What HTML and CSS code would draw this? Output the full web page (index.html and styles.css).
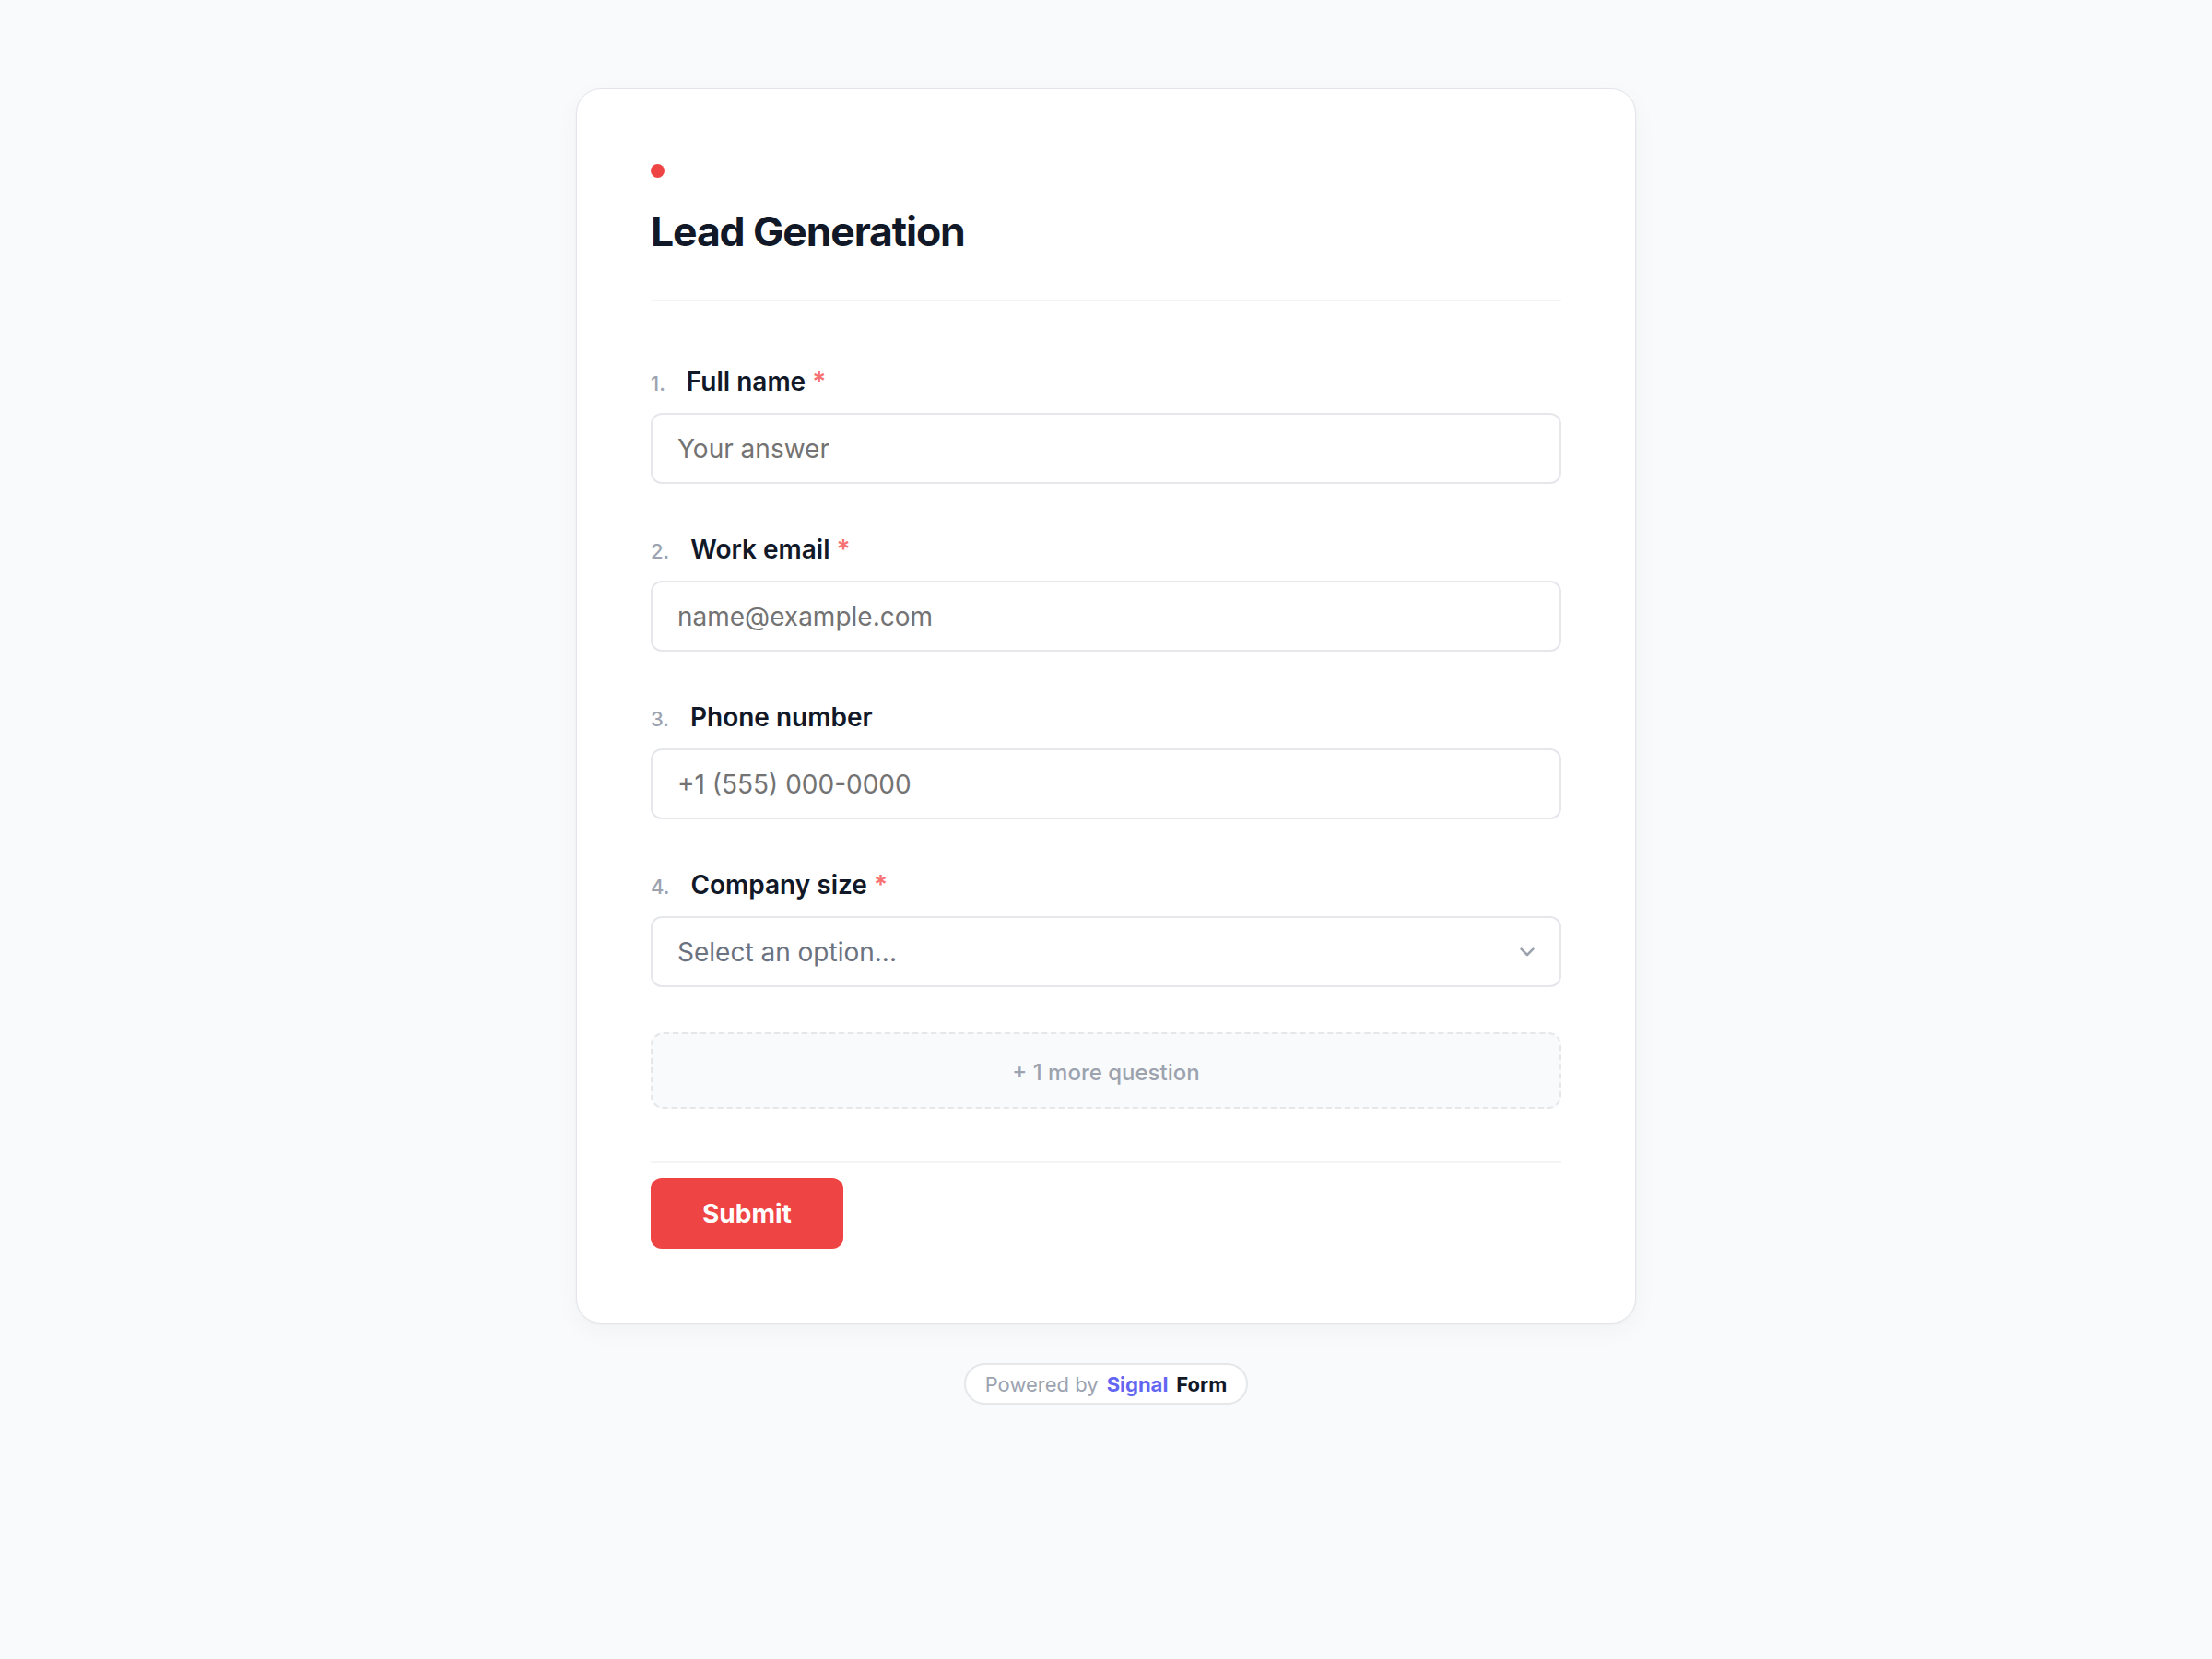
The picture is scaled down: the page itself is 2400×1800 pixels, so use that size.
FILE: index.html
```html
<!DOCTYPE html>
<html lang="en">
<head>
<meta charset="utf-8">
<title>Lead Generation</title>
<link rel="stylesheet" href="styles.css">
</head>
<body>
<main class="page">
  <section class="card">
    <header class="card-head">
      <span class="dot"></span>
      <h1 class="title">Lead Generation</h1>
    </header>

    <div class="questions">
      <div class="question">
        <label class="q-label"><span class="q-num">1.</span><span class="q-text">Full name</span><span class="req">*</span></label>
        <input class="field" type="text" placeholder="Your answer">
      </div>
      <div class="question">
        <label class="q-label"><span class="q-num">2.</span><span class="q-text">Work email</span><span class="req">*</span></label>
        <input class="field" type="text" placeholder="name@example.com">
      </div>
      <div class="question">
        <label class="q-label"><span class="q-num">3.</span><span class="q-text">Phone number</span></label>
        <input class="field" type="text" placeholder="+1 (555) 000-0000">
      </div>
      <div class="question">
        <label class="q-label"><span class="q-num">4.</span><span class="q-text">Company size</span><span class="req">*</span></label>
        <div class="field select">
          <span class="select-text">Select an option...</span>
          <svg class="chevron" width="16" height="10" viewBox="0 0 16 10"><polyline points="1.6,1.6 8,8 14.4,1.6" fill="none" stroke="#9ca3af" stroke-width="2.6" stroke-linecap="round" stroke-linejoin="round"/></svg>
        </div>
      </div>
      <div class="more">+ 1 more question</div>
    </div>

    <footer class="card-foot">
      <button class="submit" type="button">Submit</button>
    </footer>
  </section>

  <div class="powered">
    <span class="pw-muted">Powered by</span>
    <span class="pw-brand">Signal</span>
    <span class="pw-form">Form</span>
  </div>
</main>
</body>
</html>
```
FILE: styles.css
```css
* { box-sizing: border-box; }

html, body {
  margin: 0;
  padding: 0;
  background: #f9fafb;
  font-family: Inter, "Noto Sans", "Liberation Sans", sans-serif;
  color: #111827;
}

.page {
  display: flex;
  flex-direction: column;
  align-items: center;
  padding-top: 96px;
  padding-bottom: 120px;
}

.card {
  width: 1150px;
  background: #ffffff;
  border: 1px solid #e3e5ea;
  border-radius: 27px;
  box-shadow: 0 1px 3px rgba(17, 24, 39, 0.04), 0 8px 28px rgba(17, 24, 39, 0.035);
  padding: 81px 80px 80px;
}

.card-head {
  border-bottom: 2px solid #f3f4f6;
  padding-bottom: 46px;
}

.dot {
  display: block;
  width: 15px;
  height: 15px;
  border-radius: 50%;
  background: #ef4444;
}

.title {
  margin: 30px 0 0;
  font-size: 44.5px;
  line-height: 56px;
  font-weight: 700;
  letter-spacing: -0.025em;
  color: #111827;
}

.questions {
  display: flex;
  flex-direction: column;
  gap: 51px;
  padding-top: 67px;
}

.question {
  display: flex;
  flex-direction: column;
  gap: 14px;
}

.q-label {
  display: flex;
  align-items: baseline;
  height: 40px;
  line-height: 40px;
}

.q-num {
  font-size: 22px;
  font-weight: 500;
  color: #9ca3af;
  margin-right: 23px;
}

.q-text {
  font-size: 28px;
  font-weight: 600;
  color: #111827;
}

.req {
  font-size: 28px;
  font-weight: 600;
  color: #f87171;
  margin-left: 7px;
}

.field {
  display: block;
  width: 100%;
  height: 77px;
  border: 2px solid #e5e7eb;
  border-radius: 12px;
  background: #ffffff;
  padding: 0 27px;
  font-family: Inter, "Noto Sans", "Liberation Sans", sans-serif;
  font-size: 28px;
  color: #111827;
  outline: none;
}

.field::placeholder {
  color: #737373;
  opacity: 1;
}

.select {
  display: flex;
  align-items: center;
  justify-content: space-between;
  padding-right: 27px;
}

.select-text {
  color: #6b7280;
}

.chevron {
  display: block;
  margin-top: 1px;
}

.more {
  height: 83px;
  display: flex;
  align-items: center;
  justify-content: center;
  background: #f9fafb;
  border: 2px dashed #e5e7eb;
  border-radius: 14px;
  font-size: 24px;
  font-weight: 500;
  color: #9ca3af;
  margin-top: -2px;
  padding-top: 4px;
}

.card-foot {
  margin-top: 57px;
  border-top: 2px solid #f3f4f6;
  padding-top: 16px;
}

.submit {
  display: block;
  height: 77px;
  padding: 0 56px;
  border: none;
  border-radius: 12px;
  background: #ef4444;
  color: #ffffff;
  font-family: Inter, "Noto Sans", "Liberation Sans", sans-serif;
  font-size: 28px;
  font-weight: 700;
}

.powered {
  margin-top: 43px;
  display: flex;
  align-items: center;
  gap: 9px;
  height: 45px;
  padding: 0 21px;
  border: 2px solid #e5e7eb;
  border-radius: 999px;
  background: #ffffff;
  font-size: 22px;
}

.pw-muted {
  color: #9ca3af;
  font-weight: 400;
}

.pw-brand {
  color: #6366f1;
  font-weight: 700;
}

.pw-form {
  color: #111827;
  font-weight: 700;
}
```
